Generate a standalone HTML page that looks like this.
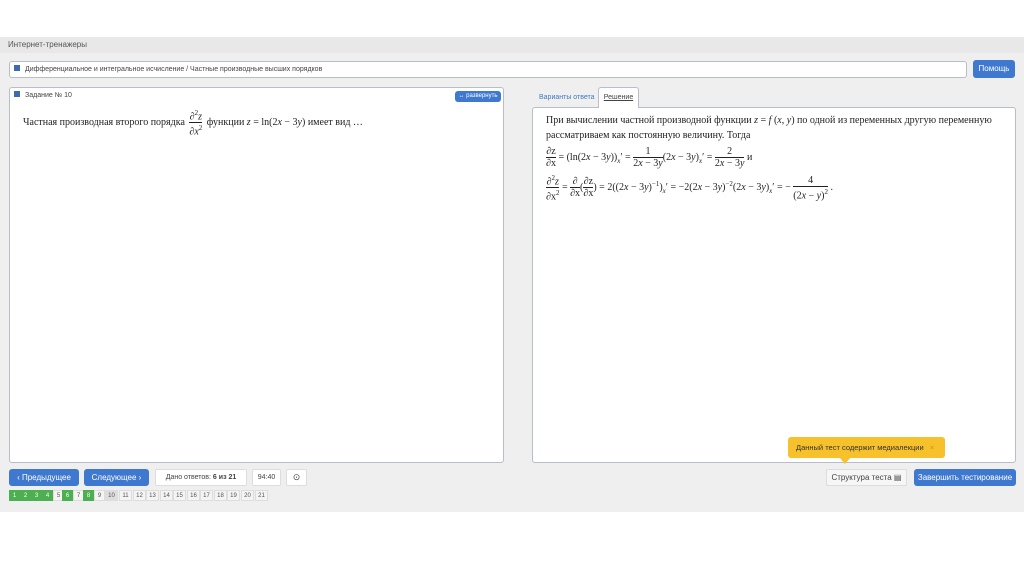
<!DOCTYPE html><html><head><meta charset="utf-8"><style>
*{margin:0;padding:0;box-sizing:border-box}
body{width:1024px;height:574px;background:#fff;position:relative;font-family:"Liberation Sans",sans-serif;overflow:hidden}
.a{position:absolute}
.band{left:0;top:37px;width:1024px;height:475px;background:#efefef}
.hdr{left:0;top:37px;width:1024px;height:16px;background:#e8e8e8;font-size:8px;color:#555;padding:3px 8px}
.box{background:#fff;border:1px solid #b9bdc9;border-radius:3px}
.sq{display:inline-block;width:6px;height:6px;background:#3e6bb0;margin-right:5px;vertical-align:0}
.btn{background:#3f79cf;color:#fff;border-radius:3px;font-size:8px;text-align:center}
.wb{background:#fff;border:1px solid #ddd;border-radius:2px;font-size:7px;color:#444;text-align:center}
.ser{font-family:"Liberation Serif",serif;color:#222}
.pg{position:absolute;top:490px;height:11px;width:11px;font-size:6px;text-align:center;line-height:11px;color:#555;background:#f4f4f4;border:1px solid #ddd}
.g{background:#4caf50;color:#fff;border-color:#4caf50}
.f{display:inline-block;text-align:center;vertical-align:middle;font-size:10px;line-height:11px}
.f span{display:block}.f .n{border-bottom:1px solid #222}
</style></head><body>
<div class="a band"></div>
<div class="a hdr">Интернет-тренажеры</div>
<div class="a box" style="left:9px;top:61px;width:958px;height:17px;font-size:7px;color:#444;padding:3px 4px"><span class="sq"></span>Дифференциальное и интегральное исчисление / Частные производные высших порядков</div>
<div class="a btn" style="left:973px;top:60px;width:42px;height:18px;line-height:18px">Помощь</div>
<div class="a box" style="left:9px;top:87px;width:495px;height:376px">
<div class="a" style="left:4px;top:3px;font-size:7px;color:#444"><span class="sq"></span>Задание № 10</div>
<div class="a btn" style="left:445px;top:3px;width:46px;height:11px;line-height:11px;font-size:6px">↔ развернуть</div>
<div class="a ser" style="left:13px;top:20px;font-size:10px;white-space:nowrap">Частная производная второго порядка <span class="f" style="margin:0 2px"><span class="n">∂<sup style="font-size:7px">2</sup><i>z</i></span><span>∂<i>x</i><sup style="font-size:7px">2</sup></span></span> функции <i>z</i> = ln(2<i>x</i> − 3<i>y</i>) имеет вид …</div>
</div>
<div class="a" style="left:539px;top:94px;font-size:7px;color:#3e7bbf">Варианты ответа</div>
<div class="a" style="left:598px;top:87px;width:41px;height:21px;background:#fff;border:1px solid #b9bdc9;border-bottom:none;border-radius:3px 3px 0 0;font-size:7px;color:#444;text-align:center;padding-top:6px;z-index:2;text-decoration:underline">Решение</div>
<div class="a box" style="left:532px;top:107px;width:484px;height:356px">
<div class="a ser" style="left:13px;top:5px;width:470px;font-size:10px;line-height:15px;white-space:nowrap">При вычислении частной производной функции <i>z</i> = <i>f</i> (<i>x</i>, <i>y</i>) по одной из переменных другую переменную<br>рассматриваем как постоянную величину. Тогда</div>
<div class="a ser" style="left:13px;top:38px;font-size:10px;white-space:nowrap"><span class="f"><span class="n">∂z</span><span>∂x</span></span> = (ln(2<i>x</i> − 3<i>y</i>))<sub style="font-size:7px"><i>x</i></sub>′ = <span class="f"><span class="n">1</span><span>2<i>x</i> − 3<i>y</i></span></span>(2<i>x</i> − 3<i>y</i>)<sub style="font-size:7px"><i>x</i></sub>′ = <span class="f"><span class="n">2</span><span>2<i>x</i> − 3<i>y</i></span></span> и</div>
<div class="a ser" style="left:13px;top:65px;font-size:10px;white-space:nowrap"><span class="f"><span class="n">∂<sup style="font-size:7px">2</sup><i>z</i></span><span>∂x<sup style="font-size:7px">2</sup></span></span> = <span class="f"><span class="n">∂</span><span>∂x</span></span>(<span class="f"><span class="n">∂z</span><span>∂x</span></span>) = 2((2<i>x</i> − 3<i>y</i>)<sup style="font-size:7px">−1</sup>)<sub style="font-size:7px"><i>x</i></sub>′ = −2(2<i>x</i> − 3<i>y</i>)<sup style="font-size:7px">−2</sup>(2<i>x</i> − 3<i>y</i>)<sub style="font-size:7px"><i>x</i></sub>′ = − <span class="f"><span class="n">4</span><span>(2<i>x</i> − <i>y</i>)<sup style="font-size:7px">2</sup></span></span> .</div>
</div>
<div class="a" style="left:788px;top:437px;width:157px;height:21px;background:#f7c12b;border-radius:3px;font-size:7.5px;color:#333;padding:6px 8px">Данный тест содержит медиалекции <span style="color:#e08b00;margin-left:4px">×</span></div>
<div class="a" style="left:840px;top:458px;width:0;height:0;border-left:5px solid transparent;border-right:5px solid transparent;border-top:6px solid #f7c12b"></div>
<div class="a btn" style="left:9px;top:469px;width:70px;height:17px;line-height:17px">‹ Предыдущее</div>
<div class="a btn" style="left:84px;top:469px;width:65px;height:17px;line-height:17px">Следующее ›</div>
<div class="a wb" style="left:155px;top:469px;width:92px;height:17px;line-height:15px">Дано ответов: <b>6 из 21</b></div>
<div class="a wb" style="left:252px;top:469px;width:29px;height:17px;line-height:15px">94:40</div>
<div class="a wb" style="left:286px;top:469px;width:21px;height:17px;line-height:15px;font-size:9px">⊙</div>
<div class="a wb" style="left:826px;top:469px;width:81px;height:17px;line-height:15px;font-size:8px;background:#f6f6f6">Структура теста ▤</div>
<div class="a btn" style="left:914px;top:469px;width:102px;height:17px;line-height:17px">Завершить тестирование</div>
<div class="pg g" style="left:9px">1</div><div class="pg g" style="left:20px">2</div><div class="pg g" style="left:31px">3</div><div class="pg g" style="left:42px">4</div>
<div class="pg" style="left:53px">5</div><div class="pg g" style="left:62px">6</div><div class="pg" style="left:73px">7</div><div class="pg g" style="left:83px">8</div><div class="pg" style="left:94px">9</div>
<div class="pg" style="left:105px;width:13px;background:#ddd">10</div><div class="pg" style="left:119px;width:13px">11</div><div class="pg" style="left:133px;width:13px">12</div><div class="pg" style="left:146px;width:13px">13</div><div class="pg" style="left:160px;width:13px">14</div><div class="pg" style="left:173px;width:13px">15</div><div class="pg" style="left:187px;width:13px">16</div><div class="pg" style="left:200px;width:13px">17</div><div class="pg" style="left:214px;width:13px">18</div><div class="pg" style="left:227px;width:13px">19</div><div class="pg" style="left:241px;width:13px">20</div><div class="pg" style="left:255px;width:13px">21</div>
</body></html>
